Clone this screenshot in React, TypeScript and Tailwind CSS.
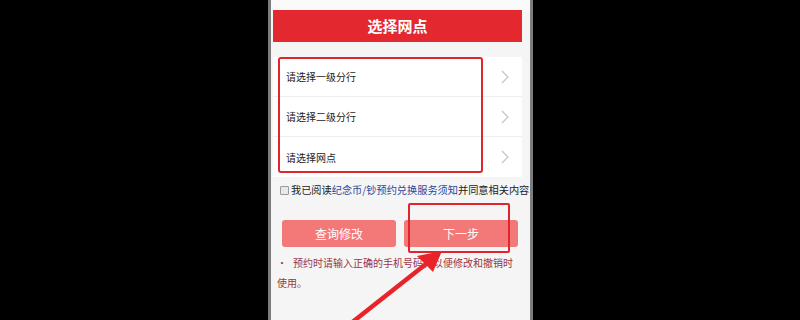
const rows = ["请选择一级分行", "请选择二级分行", "请选择网点"];

const Chevron = () => (
  <svg width="10" height="16" viewBox="0 0 10 16" fill="none">
    <path d="M2 2l6 6-6 6" stroke="#c8c8c8" strokeWidth="1.4" />
  </svg>
);

export default function App() {
  return (
    <div
      className="relative flex h-[320px] w-[800px] overflow-hidden bg-black"
      style={{ fontFamily: '"Noto Sans CJK SC", "Noto Sans", sans-serif' }}
    >
      <div className="w-[268px] shrink-0" />
      <div className="flex h-full w-[265px] shrink-0 flex-col border-x-[3px] border-[#7d7d7d] bg-[#f5f5f5]">
        <div className="h-[10px] bg-[#fafafa]" />
        <div className="ml-[2px] flex h-[32px] w-[249px] items-center justify-center bg-[#e3282f] text-[15px] font-bold text-white">
          选择网点
        </div>

        <div className="ml-[2px] mt-[15px] w-[249px] bg-white">
          {rows.map((r, i) => (
            <div
              key={r}
              className={`flex h-[40px] items-center justify-between pl-[13px] pr-[12px] ${i < 2 ? "border-b border-[#efefef]" : ""}`}
            >
              <span className="text-[10px] text-[#222]">{r}</span>
              <Chevron />
            </div>
          ))}
        </div>

        <div className="ml-[9px] mt-[6px] flex items-center gap-[2px] whitespace-nowrap text-[10.2px] leading-[14px]">
          <span className="h-[9px] w-[9px] rounded-[1px] border border-[#9a9a9a] bg-[#e8e8e8]" />
          <span className="text-[#222]">
            我已阅读<span className="text-[#2f4597]">纪念币/钞预约兑换服务须知</span>并同意相关内容
          </span>
        </div>

        <div className="ml-[11px] mt-[23px] flex w-[236px] gap-[8px]">
          <div className="flex h-[27px] flex-1 items-center justify-center rounded-[3px] bg-[#f37878] text-[12px] text-white">
            查询修改
          </div>
          <div className="flex h-[27px] flex-1 items-center justify-center rounded-[3px] bg-[#f37878] text-[12px] text-white">
            下一步
          </div>
        </div>

        <div className="ml-[6px] mt-[6px] w-[240px] text-[10px] leading-[20px] text-[#9b3642]">
          <div className="flex">
            <span className="w-[16px] shrink-0">•</span>
            <span>预约时请输入正确的手机号码，以便修改和撤销时</span>
          </div>
          <div>使用。</div>
        </div>
      </div>

      {/* annotation boxes and arrow drawn over the screenshot */}
      <div className="absolute left-[278px] top-[57px] h-[116px] w-[205px] rounded-[3px] border-2 border-[#e0262c]" />
      <div className="absolute left-[408px] top-[203px] h-[50px] w-[102px] rounded-[2px] border-2 border-[#e0262c]" />
      <svg className="absolute left-0 top-0" width="800" height="320" viewBox="0 0 800 320">
        <path d="M350 324 L426 264" stroke="#e8242a" strokeWidth="4.5" strokeLinecap="round" />
        <path d="M442 251 L417 256 L433 272 Z" fill="#e8242a" />
      </svg>
    </div>
  );
}
